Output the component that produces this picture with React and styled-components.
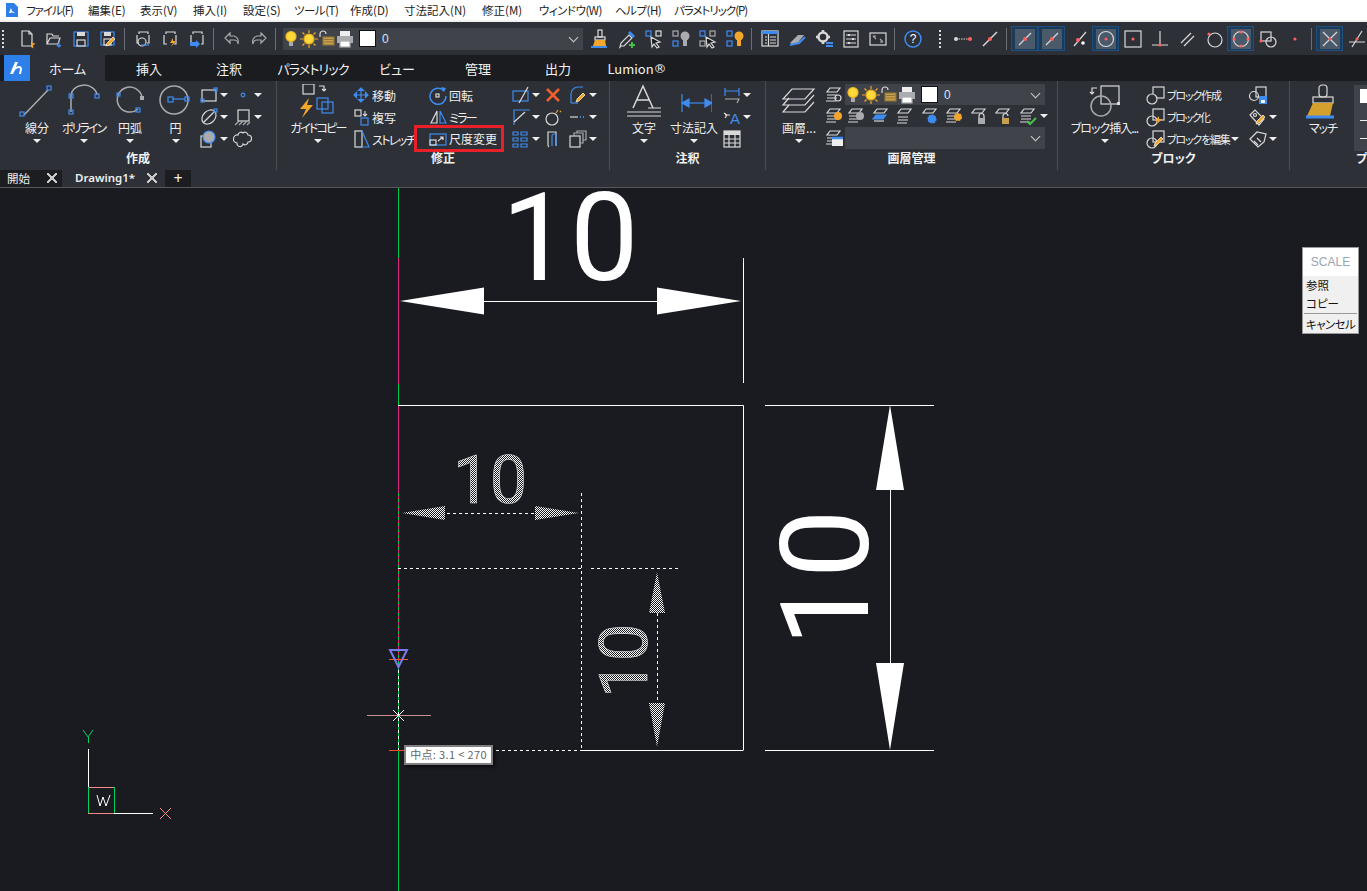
import React from 'react'
import styled, { createGlobalStyle } from 'styled-components'

const B = '#3f8cf0'
const W = '#d9d9d9'
const G = '#a9abae'
const O = '#f2a62c'
const R = '#ff5f5f'
const CJK = `"Noto Sans CJK JP", "Noto Sans", sans-serif`

const GlobalStyle = createGlobalStyle`
  html, body, #root { margin: 0; height: 100%; }
  body { overflow: hidden; background: #191b20; font-family: ${CJK}; font-feature-settings: "palt"; }
`

const Ico = ({ s = 20, children }) => (
  <svg width={s} height={s} viewBox={`0 0 ${s} ${s}`} fill="none" stroke={W} strokeWidth="1.2">{children}</svg>
)

const Dot = ({ x, y, r = 1.6, c = R }) => <circle cx={x} cy={y} r={r} fill={c} stroke="none" />
const Sq = ({ x, y, s = 4, c = B }) => <rect x={x} y={y} width={s} height={s} stroke={c} />

const bulb = <><circle cx="10" cy="7.5" r="5" fill="#ffd83a" stroke="#e9b820" /><rect x="8" y="13" width="4" height="4" fill={G} stroke="none" /></>
const sun = <><circle cx="10" cy="10" r="5" fill="#ffd83a" stroke="#e9a820" /><path d="M10 1v3M10 16v3M1 10h3M16 10h3M3.5 3.5l2 2M14.5 14.5l2 2M16.5 3.5l-2 2M3.5 16.5l2-2" stroke={O} /></>
const lock = <><path d="M3 8V5a3 3 0 0 1 6 0" /><rect x="6" y="8" width="11" height="8" fill="#c9a04c" stroke="#8d7238" /><path d="M7 10.5h9M7 13h9" stroke="#8d7238" /></>
const printer = <><rect x="5" y="2" width="10" height="6" fill="#eee" stroke="none" /><rect x="2" y="7" width="16" height="7" fill={G} stroke="none" /><rect x="5" y="12" width="10" height="6" fill="#fff" stroke={G} /></>
const pencil = <path d="M8 17l1-3 6-6 2 2-6 6z" fill={O} stroke="#f5e6c0" strokeWidth=".8" />
const layers = <><path d="M6 3h10l-3 4H3z" /><path d="M3 10h10M3 13h10M2 16h10" /></>

const toolIcons = {
  newDoc: <><path d="M5 2h7l3 3v12H5z" /><path d="M12 2v3h3" /><path d="M14 11l1.5 3 3 .5-2.5 2 .5 3-2.500-1.500z" fill={O} stroke="none" /></>,
  open: <><path d="M3 15V5h5l1 2h6M3 15l3-6h10l-2 6z" /><path d="M15 13v5M13 16l2 2 2-2" stroke={B} /></>,
  save: <><rect x="3" y="3" width="14" height="14" stroke={B} /><rect x="6" y="3" width="8" height="4" fill={W} stroke="none" /><rect x="6" y="11" width="8" height="6" /></>,
  saveAs: <><rect x="3" y="3" width="13" height="13" stroke={B} /><rect x="6" y="3" width="7" height="4" fill={W} stroke="none" /><rect x="6" y="10" width="7" height="6" />{pencil}</>,
  preview: <><path d="M6 5V3h9v2M4 6v8h2M16 6v8h-2" /><circle cx="9" cy="13" r="4" /><path d="M8 16h8" stroke={B} /></>,
  plot: <><path d="M6 5V3h9v2M4 6v9h3M16 6v9h-2" /><path d="M13 9l-3 5h3l-2 4 5-6h-3z" fill={O} stroke="none" /></>,
  publish: <><path d="M6 5V3h9v2M4 6v9M16 6v9h-2" /><path d="M3 13h6v-2l4 4-4 4v-2H3z" fill={B} stroke="none" /></>,
  undo: <path d="M8 4L3 9l5 5v-3h4a4 4 0 0 1 4 4 6 6 0 0 0-4-8H8z" stroke={G} />,
  redo: <path d="M12 4l5 5-5 5v-3H8a4 4 0 0 0-4 4 6 6 0 0 1 4-8h4z" stroke={G} />,
  brush: <><rect x="8" y="1" width="4" height="7" /><rect x="5" y="8" width="10" height="3" /><path d="M5 11h10l1 6H3z" fill={O} stroke="none" /><path d="M1 18h16" stroke={B} strokeWidth="2" /></>,
  dropper: <><path d="M4 17l-1 1 1-4 8-8 3 3-8 8z" /><path d="M11 4l2-2 5 5-2 2z" fill={B} stroke="none" /><path d="M15 13v6M12 16h6" stroke="#46c04a" strokeWidth="2" /></>,
  quick: <><Sq x="2" y="2" s="5" /><rect x="12" y="2" width="5" height="5" /><path d="M7 8l9 5-4 1 3 4-2 1-3-4-2 3z" fill="#191b20" /></>,
  bulbs: <><rect x="2" y="2" width="5" height="5" stroke={G} /><Sq x="2" y="12" s="5" /><circle cx="14" cy="7" r="4.500" fill={G} stroke="none" /><rect x="12" y="11" width="4" height="6" fill={G} stroke="none" /></>,
  picks: <><Sq x="2" y="2" s="5" /><rect x="12" y="2" width="5" height="5" stroke={G} /><rect x="2" y="12" width="5" height="5" stroke={G} /><path d="M8 8l9 5-4 1 3 4-2 1-3-4-2 3z" fill="#191b20" /></>,
  orange: <><Sq x="2" y="2" s="5" /><Sq x="2" y="12" s="5" /><circle cx="14" cy="7" r="4.500" fill={O} stroke="none" /><rect x="12" y="11" width="4" height="6" fill={O} stroke="none" /></>,
  props: <><rect x="2" y="2" width="16" height="15" /><rect x="2" y="2" width="16" height="3" fill={B} stroke="none" /><path d="M5 8h2M5 11h2M5 14h2M10 8h6M10 11h6M10 14h6M8.500 5v12" /></>,
  eraser: <><path d="M3 14l8-8h6l-7 9H5z" fill={G} stroke="none" /><path d="M3 16l9-2 6-6" stroke={B} strokeWidth="2" /></>,
  gear: <><circle cx="9" cy="8" r="4.500" strokeWidth="2.500" /><path d="M9 1v3M9 12v3M2 8h3M13 8h3" strokeWidth="2.500" /><path d="M12 14h7M12 17h7" stroke={B} strokeWidth="2" /></>,
  sliders: <><rect x="3" y="2" width="14" height="16" /><path d="M5 6h10M5 10h10M5 14h10" /><path d="M8 5v2M12 9v2M8 13v2" strokeWidth="2" /></>,
  fit: <><rect x="2" y="4" width="16" height="12" /><path d="M5 7l3 3M5 7h3M15 13l-3-3M15 13h-3" stroke={G} /></>,
  help: <><circle cx="10" cy="10" r="8" stroke={B} strokeWidth="1.500" /><text x="10" y="14" fill="#fff" stroke="none" fontSize="12" fontFamily="Liberation Sans" textAnchor="middle">?</text></>,
  dotLine: <><path d="M3 10h14" strokeDasharray="1.500 1" /><Dot x={3} y={10} r={2} c={W} /><Dot x={17} y={10} r={2} c={R} /></>,
  snapLine: <><path d="M3 17L17 3" strokeWidth="1.500" /><Dot x={10} y={10} r={2} /></>,
  snapEnd: <><path d="M4 16L16 4" /><Dot x={10} y={10} r={2} /></>,
  snapMid: <><path d="M4 16L16 4" /><Dot x={10} y={10} r={2} /></>,
  snapInt: <><path d="M5 17L17 3" /><Dot x={9} y={11} r={2} /><Dot x={14} y={14} r={1.800} c="#fff" /></>,
  snapCenter: <><circle cx="10" cy="10" r="7.500" /><Dot x={10} y={10} /></>,
  snapNode: <><rect x="2" y="2" width="16" height="16" /><Dot x={10} y={10} /></>,
  snapPerp: <><path d="M10 2v14M2 16h16" /><Dot x={10} y={16} /></>,
  snapPara: <path d="M4 14L14 4M7 17L17 7" />,
  snapTan: <><circle cx="11" cy="11" r="7" /><Dot x={5} y={5} /></>,
  snapQuad: <><circle cx="10" cy="10" r="7.500" /><Dot x={10} y={3} /><Dot x={10} y={17} /><Dot x={3} y={10} /><Dot x={17} y={10} /></>,
  snapExt: <><rect x="3" y="3" width="10" height="9" /><circle cx="13" cy="13" r="5" /><Dot x={3} y={12} /></>,
  snapPoint: <Dot x={10} y={10} />,
  snapX: <><path d="M3 3l14 14M17 3L3 17" /><Dot x={10} y={10} /></>,
  snapSlash: <><path d="M5 18L15 2M2 13h16" /><Dot x={10} y={10} /></>
}

const ribbonIcons = {
  rect: <><rect x="3" y="5" width="14" height="11" /><Sq x={15} y={3} s={3} /><Sq x={2} y={14} s={3} /></>,
  point: <circle cx="10" cy="10" r="1.800" stroke={B} />,
  ellipse: <><ellipse cx="10" cy="10" rx="8" ry="6" transform="rotate(-45 10 10)" /><path d="M4 16L16 4" /><Sq x={15} y={2} s={3} /></>,
  hatch: <><rect x="5" y="3" width="11" height="11" /><path d="M2 18L6 14M6 18l4-4M10 18l4-4M14 18l3-3" stroke={G} /></>,
  region: <><rect x="2" y="7" width="10" height="11" /><circle cx="10" cy="8" r="6" fill={G} stroke={B} /></>,
  cloud: <path d="M5 6a3 3 0 0 1 5-2 3 3 0 0 1 5 2 3 3 0 0 1 0 7 3 3 0 0 1-5 2 3 3 0 0 1-6-1 4 4 0 0 1 1-8z" />,
  move: <path d="M10 3v14M3 10h14M10 3l-2.500 2.500h5zM10 17l-2.500-2.500h5zM3 10l2.500-2.500v5zM17 10l-2.500-2.500v5z" fill={B} stroke={B} />,
  copy: <><rect x="4" y="3" width="6" height="6" /><rect x="10" y="11" width="7" height="7" stroke={B} /><path d="M14 4v5" /><path d="M12 7l2 2 2-2" /></>,
  stretch: <><rect x="4" y="2" width="7" height="16" /><path d="M11 2l7 16h-7" stroke={B} /></>,
  rotate: <><path d="M16 6a8 8 0 1 0 2 5" stroke={B} strokeWidth="1.500" /><path d="M13 2l5 1-2 4z" fill={B} stroke="none" /><rect x="8" y="9" width="3" height="3" /></>,
  mirror: <><path d="M9 16H3L9 4z" /><path d="M12 16h6L12 4z" stroke={B} /></>,
  scale: <><rect x="2" y="5" width="16" height="11" stroke={B} /><rect x="2" y="11" width="6" height="5" /><path d="M10 12l5-4M12 8h3v3" stroke={W} /></>,
  trim: <><rect x="2" y="6" width="15" height="10" stroke={B} /><path d="M8 18L17 2" /></>,
  chamfer: <><path d="M3 18V3h16" stroke={B} /><path d="M3 15L14 5" stroke={W} /></>,
  array: <path d="M2 3h5v3H2zM10 3h6v3h-6zM2 9h5v3H2zM10 9h6v3h-6zM2 15h5v3H2zM10 15h6v3h-6z" stroke={B} />,
  del: <path d="M4 4l12 12M16 4L4 16" stroke="#f0602c" strokeWidth="2.500" />,
  explode: <><circle cx="9" cy="12" r="6" /><path d="M13 6l2-3M17 5l1-1" stroke={O} /></>,
  offset: <><path d="M6 18a3 3 0 0 1-1-3V3h8v14" /><path d="M9 17V7a2 2 0 0 1 4 0v10" stroke={B} /></>,
  fillet: <><path d="M3 18V9a7 7 0 0 1 7-7h5" stroke={B} /><path d="M3 18h7" stroke={B} />{pencil}</>,
  linetype: <><path d="M2 10h8" /><path d="M12 10h1M15 10h1" stroke={B} strokeWidth="2" /></>,
  copies: <><rect x="2" y="7" width="10" height="11" /><path d="M6 7V4h9v10h-3" stroke={G} /><path d="M9 4V2h9v9h-3" stroke={G} /></>,
  dimLinear: <><path d="M3 3v8M17 3v8M3 6h14" stroke={B} /><path d="M3 14h14l-2 4" stroke={G} /></>,
  textStyle: <><path d="M2 6l3 2-2 3M8 8H3" /><text x="8" y="17" fontSize="15" fill={B} stroke="none" fontFamily="Liberation Sans">A</text></>,
  table: <><rect x="2" y="2" width="16" height="16" /><rect x="2" y="2" width="16" height="4" fill={W} stroke="none" /><path d="M2 10h16M2 14h16M7 6v12M13 6v12" /></>,
  layerFind: <>{layers}<circle cx="14" cy="13" r="3" /></>,
  layerBulb: <>{layers}<circle cx="14" cy="10" r="4" fill={O} stroke="none" /></>,
  layerGray: <>{layers}<circle cx="14" cy="10" r="4" fill={G} stroke="none" /></>,
  layerBlue: <><path d="M6 3h10l-3 4H3z" /><path d="M5 9h10l-3 4H2z" fill={B} stroke={B} /><path d="M3 15h10" /></>,
  layerPlain: <><path d="M6 3h10l-3 4H3z" /><path d="M3 11h10M3 14h10M2 17h10" /></>,
  layerCog: <><path d="M6 3h10l-3 4H3z" /><circle cx="12" cy="13" r="4" fill={B} stroke={B} strokeDasharray="2 1" /></>,
  layerSun: <>{layers}<circle cx="14" cy="11" r="3.500" fill={O} stroke={O} strokeDasharray="2 1" /></>,
  layerLock: <><path d="M6 3h10l-3 4H3z" /><rect x="9" y="12" width="7" height="6" fill={G} stroke="none" /><path d="M10 12v-2a2.500 2.500 0 0 1 5 0v2" /></>,
  layerOpen: <><path d="M6 3h10l-3 4H3z" /><rect x="9" y="12" width="7" height="6" fill="#c9a04c" stroke="none" /><path d="M10 12v-2a2.500 2.500 0 0 1 5 0" /></>,
  layerCheck: <>{layers}<path d="M9 15l3 3 6-6" stroke="#46c04a" strokeWidth="2" /></>,
  layerList: <>{layers}<rect x="8" y="10" width="11" height="8" fill="#eee" stroke="none" /><path d="M8 10h11" stroke={B} strokeWidth="2.500" /></>,
  blockMake: <><rect x="7" y="2" width="11" height="11" /><circle cx="6" cy="14" r="5" fill="#2d3036" /></>,
  blockSpark: <><rect x="7" y="2" width="11" height="11" /><circle cx="6" cy="14" r="5" /><path d="M13 9l-4 5h3l-2 4 6-6h-3z" fill={O} stroke="none" /></>,
  blockEdit: <><rect x="7" y="2" width="11" height="11" /><circle cx="6" cy="14" r="5" />{pencil}</>,
  blockSave: <><rect x="8" y="2" width="10" height="10" /><circle cx="6" cy="11" r="4.500" /><rect x="11" y="11" width="8" height="8" fill={B} stroke="none" /><rect x="13" y="15" width="4" height="3" fill="#fff" stroke="none" /></>,
  tagPen: <><path d="M2 8l5-5 9 9-5 6z" /><circle cx="7" cy="8" r="1.500" />{pencil}</>,
  tag: <><path d="M2 10l7-7 9 2-2 8-6 5z" /><path d="M6 12l4 4M9 9l4 4" /></>
}

const largeIcons = {
  line: <><path d="M5 31L29 6" stroke={G} strokeWidth="1.500" /><Sq x={1} y={28} s={4} /><Sq x={28} y={2} s={4} /></>,
  poly: <><path d="M5 28V13a12 10 0 0 1 26-2" stroke={G} strokeWidth="1.500" /><Sq x={3} y={10} s={4} /><Sq x={3} y={26} s={4} /><Sq x={29} y={10} s={4} /></>,
  arc: <><path d="M26 25A12.500 12.500 0 1 1 30 13" stroke={G} strokeWidth="1.500" /><Sq x={5} y={9} s={3} /><Sq x={24} y={24} s={4} /><rect x="28" y="12" width="4" height="4" fill={G} stroke="none" /></>,
  circle: <><circle cx="16" cy="16" r="14" stroke={G} strokeWidth="1.500" /><Sq x={10} y={13} s={5} /><Sq x={27} y={13} s={4} /><path d="M15 15h12" stroke={B} /></>,
  guide: <><rect x="3" y="0" width="11" height="10" /><path d="M19 2h5v5M22 5l2 2 2-2" /><path d="M21 12l-9 11h6l-4 9 11-13h-6z" fill={O} stroke="none" transform="translate(-12 2)" /><rect x="17" y="14" width="11" height="11" stroke={B} /><rect x="22" y="18" width="11" height="11" stroke={B} /></>,
  text: <><path d="M7 24L17 2l10 22M11 16h13" strokeWidth="1.500" /><path d="M22 24h13M1 28h34M1 32h34" /></>,
  dim: <><path d="M6 10v18M36 10v18" stroke={B} /><path d="M6 19h30" stroke={B} /><path d="M6 19l7-4v8zM36 19l-7-4v8z" fill={B} stroke={B} /></>,
  layer: <><path d="M11 5h22l-9 10H2z" /><path d="M8 14l-6 7h22l9-10" /><path d="M8 21l-6 7h22l9-10" /></>,
  insert: <><rect x="14" y="2" width="18" height="18" /><circle cx="14" cy="22" r="10" stroke={G} strokeWidth="1.500" /><path d="M5 10V4h5M3 8l2 2 2-2" /><rect x="30" y="18" width="3" height="3" fill={W} stroke="none" /></>,
  match: <><rect x="14" y="1" width="8" height="12" rx="3" /><rect x="8" y="13" width="20" height="6" /><path d="M8 19h20l-3 13H2z" fill="#d6a02c" stroke="none" /><path d="M1 33h28" stroke={B} strokeWidth="3" /></>
}

const menus = [
  ['ファイル(F)', 62, -1], ['編集(E)', 52], ['表示(V)', 53], ['挿入(I)', 50], ['設定(S)', 51], ['ツール(T)', 56, -.5],
  ['作成(D)', 54], ['寸法記入(N)', 78], ['修正(M)', 57], ['ウィンドウ(W)', 76, -.5], ['ヘルプ(H)', 59, -.5], ['パラメトリック(P)', 90, -1]
]

const App = () => (
  <>
    <GlobalStyle />
    <Page>
      <MenuBar>
        <AppMark><svg width="12" height="14" viewBox="0 0 12 14"><path d="M0 0h8l4 4v10H0z" fill="#2f7fe8" /><path d="M3 10l2-5 1 3 3 2H7L6 9l-1 1z" fill="#fff" /></svg></AppMark>
        {menus.map(([name, w, tight]) => (
          <MenuItem key={name} $w={w} $tight={tight}>{name}</MenuItem>
        ))}
      </MenuBar>
      <Toolbar>
        <Grip />
        <Tool i="newDoc" /><Tool i="open" /><Tool i="save" /><Tool i="saveAs" />
        <Sep />
        <Tool i="preview" /><Tool i="plot" /><Tool i="publish" />
        <Sep />
        <Tool i="undo" /><Tool i="redo" />
        <Sep />
        <LayerCombo $w={300} $left={3}>
          <LayerIcons />
          <ComboValue>0</ComboValue>
          <Chevron />
        </LayerCombo>
        <ToolGroup>
          <Tool i="brush" /><Tool i="dropper" /><Tool i="quick" /><Tool i="bulbs" /><Tool i="picks" /><Tool i="orange" />
        </ToolGroup>
        <Sep />
        <Tool i="props" /><Tool i="eraser" /><Tool i="gear" /><Tool i="sliders" /><Tool i="fit" />
        <Sep />
        <Tool i="help" />
        <Grip $inline />
        <Tool i="dotLine" /><Tool i="snapLine" />
        <Sep />
        <Tool i="snapEnd" active /><Tool i="snapMid" active /><Tool i="snapInt" /><Tool i="snapCenter" active /><Tool i="snapNode" /><Tool i="snapPerp" /><Tool i="snapPara" /><Tool i="snapTan" /><Tool i="snapQuad" active /><Tool i="snapExt" /><Tool i="snapPoint" />
        <Sep />
        <Tool i="snapX" active /><Tool i="snapSlash" />
      </Toolbar>
      <TabRow>
        <LogoTab><svg width="16" height="14" viewBox="0 0 16 14"><path d="M1 13L6 1h3L7 6c3-2 6-1 6 2l-1 5h-2l1-5c0-2-3-1-5 1l-2 4z" fill="#fff" /></svg></LogoTab>
        <RibbonTab $w={75} $active>ホーム</RibbonTab>
        <RibbonTab $w={88}>挿入</RibbonTab>
        <RibbonTab $w={72}>注釈</RibbonTab>
        <RibbonTab $w={96} $tight={-.8}>パラメトリック</RibbonTab>
        <RibbonTab $w={72}>ビュー</RibbonTab>
        <RibbonTab $w={90}>管理</RibbonTab>
        <RibbonTab $w={70}>出力</RibbonTab>
        <RibbonTab $w={88}>Lumion<Registered>®</Registered></RibbonTab>
      </TabRow>
      <Ribbon>
        <Panel $w={277} $pad={14} title="作成">
          <Large w={46} i="line" label="線分" />
          <Large w={47} i="poly" label="ポリライン" tight={-2} />
          <Large w={46} i="arc" label="円弧" />
          <Large w={45} i="circle" label="円" />
          <IconGrid $cols="34px 34px" $left={1}>
            <Small i="rect" caret /><Small i="point" caret />
            <Small i="ellipse" caret /><Small i="hatch" caret />
            <Small i="region" caret /><Small i="cloud" />
          </IconGrid>
        </Panel>
        <Panel $w={333} $pad={8} title="修正">
          <Large w={66} i="guide" label="ガイドコピー" tight={-1.800} />
          <SmallColumn $w={77}>
            <Small i="move" text="移動" />
            <Small i="copy" text="複写" />
            <Small i="stretch" text="ストレッチ" tight={-1.600} />
          </SmallColumn>
          <SmallColumn $w={77}>
            <Small i="rotate" text="回転" />
            <Small i="mirror" text="ミラー" tight={-1.700} />
            <Small i="scale" text="尺度変更" marked />
          </SmallColumn>
          <IconGrid $cols="32px 25px 40px" $left={6}>
            <Small i="trim" caret /><Small i="del" /><Small i="fillet" caret />
            <Small i="chamfer" caret /><Small i="explode" /><Small i="linetype" caret />
            <Small i="array" caret /><Small i="offset" /><Small i="copies" caret />
          </IconGrid>
        </Panel>
        <Panel $w={156} $pad={12} title="注釈">
          <Large w={44} i="text" label="文字" />
          <Large w={56} i="dim" label="寸法記入" />
          <IconGrid $cols="36px">
            <Small i="dimLinear" caret />
            <Small i="textStyle" caret />
            <Small i="table" />
          </IconGrid>
        </Panel>
        <Panel $w={292} $pad={7} title="画層管理">
          <Large w={52} i="layer" label="画層..." />
          <LayerRows>
            <LayerRow>
              <RowIcon i="layerFind" />
              <LayerCombo $w={200} $h={21} $left={1}>
                <LayerIcons />
                <ComboValue>0</ComboValue>
                <Chevron />
              </LayerCombo>
            </LayerRow>
            <LayerRow>
              {['layerBulb', 'layerGray', 'layerBlue', 'layerPlain', 'layerCog', 'layerSun', 'layerLock', 'layerOpen', 'layerCheck'].map((n) => (
                <RowIcon key={n} i={n} />
              ))}
              <Caret />
            </LayerRow>
            <LayerRow>
              <RowIcon i="layerList" />
              <LayerCombo $w={200} $h={22} $left={1}><Chevron /></LayerCombo>
            </LayerRow>
          </LayerRows>
        </Panel>
        <Panel $w={232} $pad={5} title="ブロック">
          <Large w={83} i="insert" label="ブロック挿入..." tight={-1} />
          <SmallColumn $w={102}>
            <Small i="blockMake" text="ブロック作成" size={11} tight={-1.200} />
            <Small i="blockSpark" text="ブロック化" size={11} tight={-1.500} />
            <Small i="blockEdit" text="ブロックを編集" size={11} tight={-1.200} caret />
          </SmallColumn>
          <IconGrid $cols="34px">
            <Small i="blockSave" />
            <Small i="tagPen" caret />
            <Small i="tag" caret />
          </IconGrid>
        </Panel>
        <Panel $w={77} $pad={2} title="プロパティ" $clip>
          <Large w={62} i="match" label="マッチ" noCaret tight={-1} />
          <PropStack>
            <Swatch />
            <PropLine />
            <PropLine />
          </PropStack>
        </Panel>
      </Ribbon>
      <DocTabs>
        <DocTab $w={62}>開始<Close /></DocTab>
        <DocTab $w={100} $active>Drawing1*<Close /></DocTab>
        <DocTab $w={26} $plus>+</DocTab>
      </DocTabs>
      <Canvas>
        <Drawing width="1367" height="703" viewBox="0 188 1367 703" fill="none">
          <defs>
            <pattern id="stipple" width="2" height="2" patternUnits="userSpaceOnUse">
              <rect width="1" height="1" fill="#fff" />
              <rect x="1" y="1" width="1" height="1" fill="#fff" />
            </pattern>
          </defs>

          {/* construction axis */}
          <path d="M398.500 188V891" stroke="#00c853" />
          <path d="M398.500 258V384M398.500 405V490" stroke="#d9267c" />
          <path d="M398.500 490V670" stroke="#d9267c" strokeDasharray="3 3" />
          <path d="M398.500 670V750" stroke="#fff" strokeDasharray="3 3" />

          {/* solid dimensions */}
          <DimText x="570" y="280" size="122">10</DimText>
          <path d="M400 301l84-13.500v27zM741 301l-84-13.500v27z" fill="#fff" />
          <path d="M484 301.500H657M743.500 258V383M398 405.500H743.500V750M581 750.500H743.500" stroke="#fff" />
          <path d="M765 405.500H934M765 750.500H934M890.500 490V663" stroke="#fff" />
          <path d="M890 405l14 85h-28zM890 750l14-87h-28z" fill="#fff" />
          <DimText x="0" y="0" size="122" transform="translate(868 578) rotate(-90)">10</DimText>

          {/* selected dimensions */}
          <DimText x="490" y="503" size="66" $stipple>10</DimText>
          <path d="M402 513l43-7v14zM579 513l-44-7v14zM657 572l8 41h-16zM657 747l8-44h-16z" fill="url(#stipple)" />
          <path d="M447 513.500H534M581.500 493V750M398 568.500H581M591 568.500H678M657.500 613V703M400 750.500H581" stroke="#fff" strokeDasharray="3 3" />
          <DimText x="0" y="0" size="66" $stipple transform="translate(647 661) rotate(-90)">10</DimText>

          {/* snap marker and crosshair */}
          <path d="M389 659.500H408" stroke="#ff5a1f" />
          <path d="M390 650h17l-8.500 17z" stroke="#7b7bf0" strokeWidth="2" />
          <path d="M367 715.500H431" stroke="#c99090" />
          <path d="M393 710l11 11M404 710l-11 11" stroke="#fff" />
          <path d="M389 750.500H404" stroke="#ff4a1f" />

          {/* ucs icon */}
          <path d="M88.500 749V787M114 813.500H153" stroke="#fff" />
          <path d="M88 787.500H114M88 813.500H114" stroke="#f58a8a" />
          <path d="M88.500 787V813M114.500 787V813" stroke="#00d060" />
          <path d="M97 795l3 11 3-9 3 9 4-11" stroke="#fff" />
          <path d="M83 730l5 7 5-7M88.500 737V743" stroke="#00d060" />
          <path d="M160 808l11 11M171 808l-11 11" stroke="#f58a8a" />
        </Drawing>
        <SnapTip>中点: 3.1 &lt; 270</SnapTip>
        <ContextMenu>
          <MenuTitle>SCALE</MenuTitle>
          <ContextItem>参照</ContextItem>
          <ContextItem>コピー</ContextItem>
          <ContextDivider />
          <ContextItem $tight>キャンセル</ContextItem>
        </ContextMenu>
      </Canvas>
    </Page>
  </>
)

const Tool = ({ i, active }) => (
  <ToolButton $active={active}><ToolFace $active={active}><Ico>{toolIcons[i]}</Ico></ToolFace></ToolButton>
)

const LayerIcons = () => (
  <LayerIconRow>
    <Ico>{bulb}</Ico><Ico>{sun}</Ico><Ico>{lock}</Ico><Ico>{printer}</Ico>
    <ColorBox />
  </LayerIconRow>
)

const Panel = ({ title, children, $w, $pad, $clip }) => (
  <PanelBox $w={$w}>
    <PanelBody $pad={$pad}>{children}</PanelBody>
    <PanelLabel $clip={$clip}>{title}</PanelLabel>
  </PanelBox>
)

const Large = ({ w, i, label, noCaret, tight }) => (
  <LargeButton $w={w}>
    <Ico s={36}>{largeIcons[i]}</Ico>
    <LargeLabel $tight={tight}>{label}</LargeLabel>
    {!noCaret && <Caret />}
  </LargeButton>
)

const Small = ({ i, text, caret, marked, tight, size }) => (
  <SmallButton $marked={marked}>
    <Ico>{ribbonIcons[i]}</Ico>
    {text && <SmallText $tight={tight} $size={size}>{text}</SmallText>}
    {caret && <Caret />}
  </SmallButton>
)

const RowIcon = ({ i }) => <RowIconBox><Ico>{ribbonIcons[i]}</Ico></RowIconBox>

export default App

const Page = styled.div`
  height: 100%;
  display: flex;
  flex-direction: column;
  overflow: hidden;
`
const MenuBar = styled.div`
  height: 20px;
  background: #fff;
  border-bottom: 2px solid #f0f0f0;
  display: flex;
  align-items: center;
  flex-shrink: 0;
`
const AppMark = styled.div`
  width: 26px;
  padding-left: 6px;
  box-sizing: border-box;
  display: flex;
`
const MenuItem = styled.div`
  width: ${(p) => p.$w}px;
  font-size: 11.5px;
  letter-spacing: ${(p) => p.$tight || 0}px;
  color: #222;
  white-space: nowrap;
`
const Toolbar = styled.div`
  height: 33px;
  background: #2d3036;
  display: flex;
  align-items: center;
  padding-left: 13px;
  flex-shrink: 0;
  overflow: hidden;
`
const Grip = styled.div`
  width: 2px;
  height: 18px;
  margin: ${(p) => (p.$inline ? '0 8px 0 13px' : '0 9px 0 -11px')};
  background: repeating-linear-gradient(#ddd 0 2px, transparent 2px 4px);
  flex-shrink: 0;
`
const ToolButton = styled.div`
  width: 27px;
  height: 25px;
  box-sizing: border-box;
  flex-shrink: 0;
  display: flex;
  align-items: center;
  justify-content: center;
  background: ${(p) => (p.$active ? '#1d3b58' : 'transparent')};
  border: 1px solid ${(p) => (p.$active ? '#1d4f80' : 'transparent')};
`
const ToolFace = styled.div`
  width: 20px;
  height: 20px;
  display: flex;
  background: ${(p) => (p.$active ? '#4a5a6a' : 'transparent')};
`
const ToolGroup = styled.div`
  display: flex;
  margin-left: 3px;
`
const Sep = styled.div`
  width: 1px;
  height: 22px;
  margin: 0 4px 0 3px;
  background: #6a6d72;
  flex-shrink: 0;
`
const LayerCombo = styled.div`
  width: ${(p) => p.$w}px;
  height: ${(p) => p.$h || 22}px;
  margin-left: ${(p) => p.$left || 0}px;
  background: #40434a;
  display: flex;
  align-items: center;
  flex-shrink: 0;
  box-sizing: border-box;
  padding-right: 6px;
`
const LayerIconRow = styled.div`
  display: flex;
  align-items: center;
  margin-left: -2px;
  & > svg { margin-right: -2px; flex-shrink: 0; }
`
const ColorBox = styled.div`
  width: 15px;
  height: 15px;
  margin-left: 6px;
  background: #fff;
  border: 1px solid #111;
  box-sizing: content-box;
`
const ComboValue = styled.div`
  margin-left: 6px;
  color: #cfe3ff;
  font-size: 12px;
  font-family: "Liberation Sans", sans-serif;
`
const Chevron = styled.div`
  width: 6px;
  height: 6px;
  margin-left: auto;
  margin-top: -3px;
  border-right: 1px solid #ccc;
  border-bottom: 1px solid #ccc;
  transform: rotate(45deg);
`
const TabRow = styled.div`
  height: 26px;
  background: #1a1c20;
  display: flex;
  padding-left: 4px;
  flex-shrink: 0;
`
const LogoTab = styled.div`
  width: 26px;
  background: #2f7fe8;
  display: flex;
  align-items: center;
  justify-content: center;
`
const RibbonTab = styled.div`
  width: ${(p) => p.$w}px;
  display: flex;
  align-items: center;
  justify-content: center;
  font-size: 13px;
  letter-spacing: ${(p) => p.$tight || 0}px;
  color: #f2f2f2;
  white-space: nowrap;
  background: ${(p) => (p.$active ? '#2d3036' : 'transparent')};
`
const Registered = styled.span`
  font-family: "DejaVu Sans", sans-serif;
  font-size: 13px;
`
const Ribbon = styled.div`
  height: 89px;
  background: #2d3036;
  display: flex;
  flex-shrink: 0;
  overflow: hidden;
`
const PanelBox = styled.div`
  width: ${(p) => p.$w}px;
  box-sizing: border-box;
  flex-shrink: 0;
  display: flex;
  flex-direction: column;
  border-right: 1px solid #4a4d52;
  &:last-child { border-right: 0; }
`
const PanelBody = styled.div`
  height: 68px;
  box-sizing: border-box;
  padding: 3px 0 0 ${(p) => p.$pad}px;
  display: flex;
`
const PanelLabel = styled.div`
  font-size: 12px;
  font-weight: 700;
  color: #f2f2f2;
  white-space: nowrap;
  text-align: ${(p) => (p.$clip ? 'left' : 'center')};
  padding-left: ${(p) => (p.$clip ? '66px' : '0')};
`
const LargeButton = styled.div`
  width: ${(p) => p.$w}px;
  flex-shrink: 0;
  display: flex;
  flex-direction: column;
  align-items: center;
`
const LargeLabel = styled.div`
  font-size: 12px;
  line-height: 17px;
  margin-top: -1px;
  margin-bottom: 3px;
  letter-spacing: ${(p) => p.$tight || 0}px;
  color: #eee;
  white-space: nowrap;
`
const Caret = styled.div`
  width: 0;
  height: 0;
  flex-shrink: 0;
  border-left: 4px solid transparent;
  border-right: 4px solid transparent;
  border-top: 4px solid #eee;
`
const IconGrid = styled.div`
  display: grid;
  grid-template-columns: ${(p) => p.$cols};
  grid-auto-rows: 22px;
  margin-left: ${(p) => p.$left || 0}px;
`
const SmallColumn = styled.div`
  width: ${(p) => p.$w}px;
  flex-shrink: 0;
  display: grid;
  grid-auto-rows: 22px;
`
const SmallButton = styled.div`
  display: flex;
  align-items: center;
  justify-content: flex-start;
  gap: 1px;
  height: 22px;
  ${(p) => p.$marked && `
    outline: 3px solid #e8202a;
    margin: 0 4px 1px -11px;
    padding-left: 11px;
    height: 21px;
  `}
`
const SmallText = styled.div`
  font-size: ${(p) => p.$size || 12}px;
  letter-spacing: ${(p) => p.$tight || 0}px;
  color: #eee;
  white-space: nowrap;
`
const LayerRows = styled.div`
  display: flex;
  flex-direction: column;
  margin-left: -1px;
`
const LayerRow = styled.div`
  display: flex;
  align-items: center;
  height: 22px;
`
const RowIconBox = styled.div`
  width: 24.5px;
  display: flex;
  justify-content: center;
  flex-shrink: 0;
  &:first-child { width: 20px; }
`
const PropStack = styled.div`
  width: 40px;
  background: #40434a;
  margin-top: 1px;
  height: 66px;
  display: flex;
  flex-direction: column;
  padding: 4px 0 0 6px;
  box-sizing: border-box;
`
const Swatch = styled.div`
  width: 14px;
  height: 14px;
  background: #fff;
`
const PropLine = styled.div`
  height: 1px;
  background: #eee;
  margin-top: 17px;
`
const DocTabs = styled.div`
  height: 17px;
  background: #2d3036;
  display: flex;
  gap: 3px;
  border-bottom: 1px solid #55585c;
  flex-shrink: 0;
`
const DocTab = styled.div`
  width: ${(p) => p.$w}px;
  box-sizing: border-box;
  padding: 0 ${(p) => (p.$active ? 8 : p.$plus ? 0 : 5)}px 2px ${(p) => (p.$active ? 10 : p.$plus ? 0 : 7)}px;
  display: flex;
  align-items: center;
  justify-content: ${(p) => (p.$plus ? 'center' : 'space-between')};
  font-size: ${(p) => (p.$plus ? 16 : 11.5)}px;
  font-family: "Noto Sans", "Noto Sans CJK JP", sans-serif;
  font-weight: ${(p) => (p.$active ? 600 : 400)};
  color: #eee;
  background: ${(p) => (p.$active ? '#2d3036' : '#1b1d21')};
  margin-right: ${(p) => (p.$active ? '-3px' : '0')};
`
const Close = styled.span`
  width: 10px;
  height: 10px;
  flex-shrink: 0;
  background:
    linear-gradient(45deg, transparent 44%, #c9c9c9 44% 56%, transparent 56%),
    linear-gradient(-45deg, transparent 44%, #c9c9c9 44% 56%, transparent 56%);
`
const Canvas = styled.div`
  position: relative;
  flex: 1;
  background: #191b20;
  overflow: hidden;
`
const Drawing = styled.svg`
  display: block;
`
const DimText = styled.text.attrs({ textAnchor: 'middle' })`
  font-family: Roboto, "Liberation Sans", sans-serif;
  font-size: ${(p) => p.size}px;
  fill: ${(p) => (p.$stipple ? 'url(#stipple)' : '#fff')};
  stroke: ${(p) => (p.$stipple ? '#dddddd' : 'none')};
  stroke-width: .6;
`
const SnapTip = styled.div`
  position: absolute;
  left: 404px;
  top: 557px;
  height: 20px;
  width: 89px;
  box-sizing: border-box;
  background: #fff;
  border: 2px solid #808080;
  box-shadow: 2px 2px 3px #0008;
  font-size: 11px;
  line-height: 15px;
  letter-spacing: .35px;
  text-align: center;
  color: #666;
  white-space: nowrap;
`
const ContextMenu = styled.div`
  position: absolute;
  left: 1303px;
  top: 60px;
  width: 55px;
  height: 85px;
  box-sizing: border-box;
  background: #f0f0f0;
  box-shadow: 0 0 0 1px #999;
  display: flex;
  flex-direction: column;
`
const MenuTitle = styled.div`
  height: 28px;
  background: #fff;
  font-family: "Liberation Sans", sans-serif;
  font-size: 12px;
  line-height: 28px;
  text-align: center;
  color: #9aa4b0;
`
const ContextItem = styled.div`
  height: 18px;
  line-height: 18px;
  padding-left: 3px;
  font-size: 11.5px;
  letter-spacing: ${(p) => (p.$tight ? '-.6px' : 0)};
  color: #111;
  white-space: nowrap;
`
const ContextDivider = styled.div`
  height: 1px;
  background: #999;
  margin: 1px 1px;
`
